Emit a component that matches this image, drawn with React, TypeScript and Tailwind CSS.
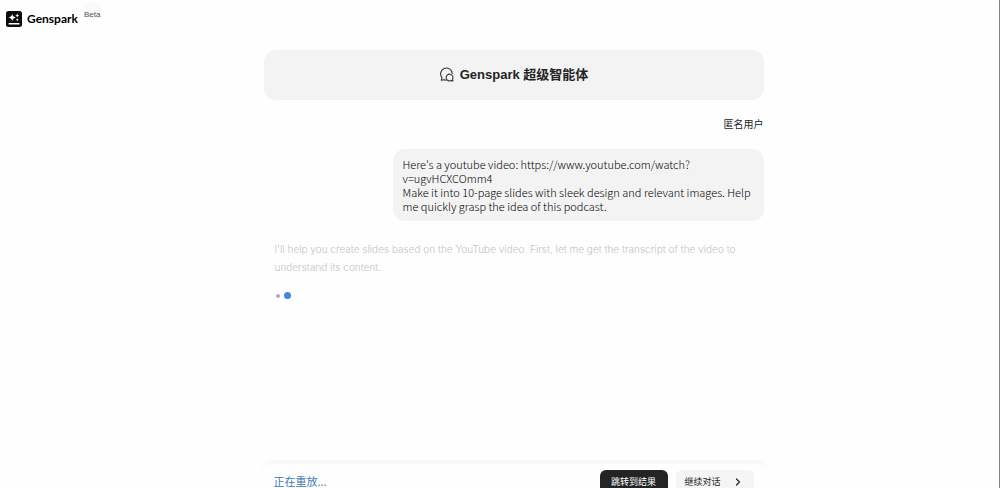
import React from "react";

function LogoMark() {
  return (
    <svg className="size-4 shrink-0" viewBox="0 0 32 32" aria-hidden="true">
      <rect width="32" height="32" rx="5" fill="#0b0b0b" />
      <path d="M12.5 5.5 Q13.4 12.1 20 13 Q13.4 13.9 12.5 20.5 Q11.6 13.9 5 13 Q11.6 12.1 12.5 5.5Z" fill="#fff" />
      <path d="M22.5 5 Q23 8.5 26.5 9 Q23 9.5 22.5 13 Q22 9.5 18.5 9 Q22 8.5 22.5 5Z" fill="#fff" />
      <path d="M22.5 14.5 Q22.9 17.1 25.5 17.5 Q22.9 17.9 22.5 20.5 Q22.1 17.9 19.5 17.5 Q22.1 17.1 22.5 14.5Z" fill="#fff" />
      <rect x="5" y="24" width="22" height="3" rx="1" fill="#fff" />
    </svg>
  );
}

function ChatIcon() {
  return (
    <svg className="size-4 shrink-0" viewBox="0 0 16 16" fill="none" stroke="#333" strokeWidth="1.1" strokeLinecap="round" strokeLinejoin="round" aria-hidden="true">
      <path d="M13.2 6.4 A5.8 5.8 0 1 0 3 10.6 L2.4 13.2 L5.2 12.7 Q6.2 13.2 7.2 13.1" />
      <path d="M13.9 13.9 L12 13.6 A3.4 3.4 0 1 1 13.5 12.2 Z" />
    </svg>
  );
}

export default function App() {
  return (
    <div className="flex h-screen flex-col overflow-hidden border-r border-[#858585] bg-[#fefefe] font-['Liberation_Sans','Noto_Sans_CJK_SC',sans-serif] text-[#232425]">
      <header className="flex h-9 shrink-0 items-center px-1.5 pt-0.5">
        <a href="#home" className="flex items-center gap-[5px] text-black">
          <LogoMark />
          <span className="font-['Lato','Noto_Sans',sans-serif] text-xs font-bold">Genspark</span>
        </a>
        <span className="ml-1 self-start rounded-full bg-[#fafafa] px-0.5 pt-2 text-[8px] leading-[10px] text-[#555]">Beta</span>
      </header>

      <main className="flex min-h-0 flex-1 flex-col pl-7">
        <section className="mx-auto flex w-full max-w-[500px] flex-col pt-3.5">
          <h1 className="flex h-[50px] items-center justify-center gap-[5px] rounded-xl bg-[#f3f3f3] text-[13px] font-bold">
            <ChatIcon />
            <span>Genspark 超级智能体</span>
          </h1>

          <div className="flex flex-col items-end gap-[17px] pt-4 font-['Noto_Sans_CJK_SC',sans-serif]">
            <p className="text-[10px] leading-4">匿名用户</p>
            <div className="w-[371px] max-w-full rounded-xl bg-[#f3f3f3] py-2 pr-1 pl-2.5 text-[11px] leading-[14px] font-light text-black">
              <p>
                Here's a youtube video: https://www.youtube.com/watch?
                <br />
                v=ugvHCXCOmm4
              </p>
              <p>Make it into 10-page slides with sleek design and relevant images. Help me quickly grasp the idea of this podcast.</p>
            </div>
          </div>

          <div className="px-[11px] pt-[19px]">
            <p className="font-['Inter',sans-serif] text-[10px] leading-[18px] font-light text-[#c4c4c4]">
              I'll help you create slides based on the YouTube video. First, let me get the transcript of the video to understand its content.
            </p>
            <div className="flex items-center gap-1 pt-4 pl-px" role="status" aria-label="Loading">
              <span className="size-1 rounded-full bg-[#b4a4d8]" />
              <span className="size-[7px] rounded-full bg-[#3e87da]" />
            </div>
          </div>
        </section>
      </main>

      <footer className="h-7 shrink-0 pl-7">
        <div className="mx-auto flex w-full max-w-[508px] items-start justify-between rounded-t-xl border-t-4 border-[#f9f9f9] px-3.5 pt-1.5 font-['Noto_Sans_CJK_SC',sans-serif]">
          <p className="pt-[5px] text-[11px] leading-3 text-[#3c7ab5]">正在重放...</p>
          <div className="flex gap-2">
            <button type="button" className="h-6 w-[68px] rounded-md bg-[#232425] text-[9px] text-white">跳转到结果</button>
            <button type="button" className="flex h-6 w-[78px] items-center justify-between rounded-md bg-[#f5f5f5] pr-3 pl-[9px] text-[9px]">
              继续对话
              <svg className="size-2" viewBox="0 0 8 8" fill="none" stroke="#232425" strokeWidth="1.2" strokeLinecap="round" strokeLinejoin="round" aria-hidden="true">
                <path d="M2.5 1 L5.5 4 L2.5 7" />
              </svg>
            </button>
          </div>
        </div>
      </footer>
    </div>
  );
}
